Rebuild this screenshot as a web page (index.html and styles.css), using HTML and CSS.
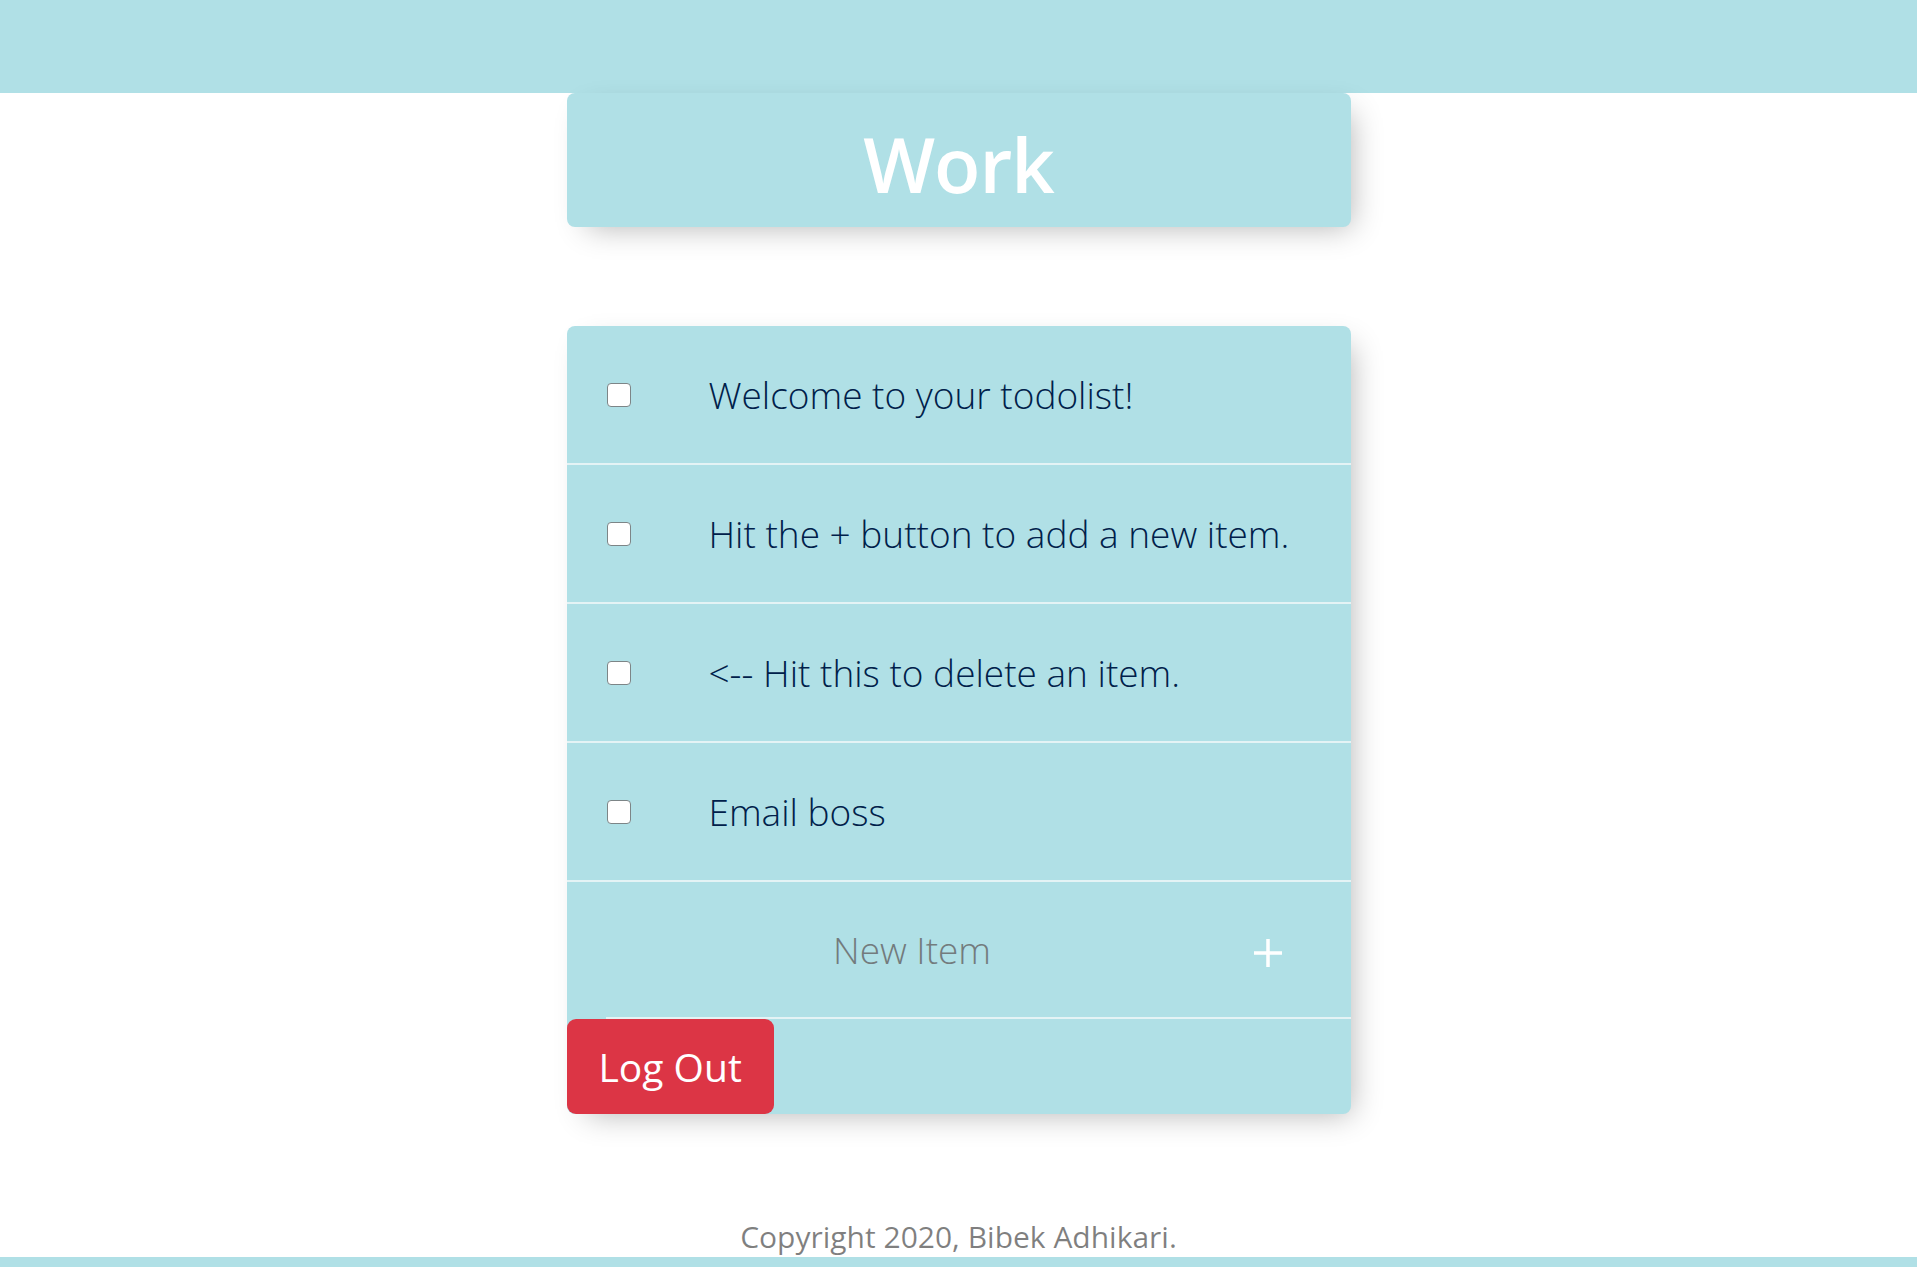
FILE: index.html
```html
<!DOCTYPE html>
<html lang="en">
<head>
<meta charset="utf-8">
<title>Work</title>
<link rel="stylesheet" href="styles.css">
</head>
<body>
<div class="topbar"></div>
<main class="main">
  <div class="box heading">
    <h1 class="title">Work</h1>
  </div>
  <div class="box list">
    <div class="item">
      <input class="check" type="checkbox">
      <p class="text">Welcome to your todolist!</p>
    </div>
    <div class="item">
      <input class="check" type="checkbox">
      <p class="text">Hit the + button to add a new item.</p>
    </div>
    <div class="item">
      <input class="check" type="checkbox">
      <p class="text">&lt;-- Hit this to delete an item.</p>
    </div>
    <div class="item">
      <input class="check" type="checkbox">
      <p class="text">Email boss</p>
    </div>
    <form class="item new-form">
      <input class="new-input" type="text" placeholder="New Item" autocomplete="off">
      <button class="add" type="button" aria-label="Add">
        <svg width="28" height="28" viewBox="0 0 28 28"><path d="M14 0V28M0 14H28" stroke="#fff" stroke-width="3.5"/></svg>
      </button>
    </form>
    <div class="logout-row">
      <button class="logout" type="button">Log Out</button>
    </div>
  </div>
</main>
<footer class="footer">
  <p class="copy">Copyright 2020, Bibek Adhikari.</p>
  <div class="bottombar"></div>
</footer>
</body>
</html>
```

FILE: styles.css
```css
html, body {
  margin: 0;
  padding: 0;
}
body {
  min-height: 100vh;
  display: flex;
  flex-direction: column;
  background: #ffffff;
  font-family: "Open Sans", "Noto Sans", sans-serif;
}
.topbar {
  height: 93px;
  background: #b0e0e6;
}
.main {
  flex: 1;
  display: flex;
  flex-direction: column;
  align-items: center;
}
.box {
  width: 784px;
  background: #b0e0e6;
  border-radius: 8px;
  box-shadow: 10px 10px 29px -10px rgba(0, 0, 0, 0.3);
}
.heading {
  text-align: center;
}
.title {
  margin: 0;
  padding: 24px 20px 17px;
  font-size: 76px;
  line-height: 93px;
  font-weight: 600;
  color: #ffffff;
  letter-spacing: -1px;
}
.list {
  margin-top: 99px;
}
.item {
  display: flex;
  align-items: center;
  min-height: 137px;
  border-bottom: 2px solid #e4f3f5;
}
.check {
  appearance: none;
  -webkit-appearance: none;
  width: 24px;
  height: 24px;
  margin: 0 39px 0 40px;
  background: #ffffff;
  border: 1px solid #7d8587;
  border-radius: 4px;
  flex: none;
}
.text {
  margin: 0;
  padding: 0 39px;
  font-size: 37px;
  font-weight: 300;
  color: #00204a;
}
.new-form {
  margin: 0 0 0 39px;
  min-height: 135px;
}
.new-input {
  width: 613px;
  height: 118px;
  padding: 0;
  border: none;
  background: transparent;
  text-align: center;
  font-family: "Open Sans", "Noto Sans", sans-serif;
  font-size: 37px;
  font-weight: 300;
  color: #00204a;
  outline: none;
}
.new-input::placeholder {
  color: #737b7d;
}
.add {
  width: 98px;
  height: 98px;
  margin-top: 6px;
  padding: 0;
  border: none;
  background: transparent;
  display: flex;
  align-items: center;
  justify-content: center;
}
.logout-row {
  display: flex;
}
.logout {
  height: 95px;
  padding: 0 32px;
  border: none;
  border-radius: 9px;
  background: #dc3545;
  color: #ffffff;
  font-family: "Open Sans", "Noto Sans", sans-serif;
  font-size: 39px;
  font-weight: 400;
}
.footer {
  display: flex;
  flex-direction: column;
  align-items: center;
}
.copy {
  margin: 0;
  font-size: 30px;
  line-height: 40px;
  color: rgba(0, 0, 0, 0.5);
}
.bottombar {
  align-self: stretch;
  height: 10px;
  background: #b0e0e6;
}
```
